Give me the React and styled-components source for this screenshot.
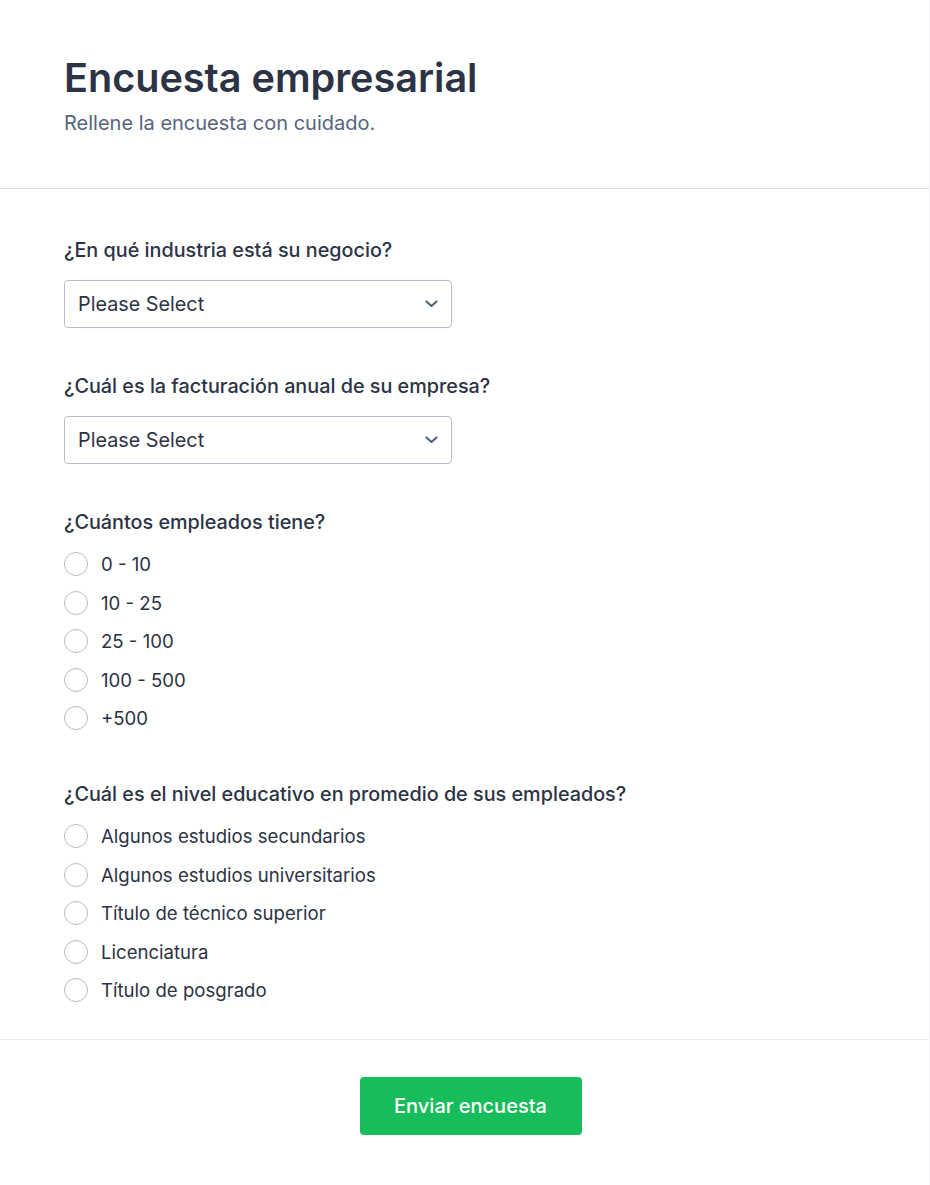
import React from "react";
import styled, { createGlobalStyle } from "styled-components";

const GlobalStyle = createGlobalStyle`
  html, body {
    margin: 0;
    padding: 0;
    background: #ffffff;
  }
  body {
    font-family: Inter, "Noto Sans", sans-serif;
    color: #2c3345;
  }
  * {
    box-sizing: border-box;
  }
`;

const questions = [
  {
    label: "¿En qué industria está su negocio?",
    type: "select",
  },
  {
    label: "¿Cuál es la facturación anual de su empresa?",
    type: "select",
  },
  {
    label: "¿Cuántos empleados tiene?",
    type: "radio",
    options: ["0 - 10", "10 - 25", "25 - 100", "100 - 500", "+500"],
  },
  {
    label: "¿Cuál es el nivel educativo en promedio de sus empleados?",
    type: "radio",
    options: [
      "Algunos estudios secundarios",
      "Algunos estudios universitarios",
      "Título de técnico superior",
      "Licenciatura",
      "Título de posgrado",
    ],
  },
];

const App = () => {
  return (
    <>
      <GlobalStyle />
      <Card>
        <Header>
          <Title>Encuesta empresarial</Title>
          <Subtitle>Rellene la encuesta con cuidado.</Subtitle>
        </Header>
        <Body>
          {questions.map((q, idx) => (
            <Question key={idx} $radio={q.type === "radio"}>
              <Label>{q.label}</Label>
              {q.type === "select" ? (
                <Select>
                  <span>Please Select</span>
                  <svg width="13" height="8" viewBox="0 0 13 8" fill="none">
                    <path
                      d="M1.5 1.5l5 4.5 5-4.5"
                      stroke="#57647e"
                      strokeWidth="2.2"
                      strokeLinecap="round"
                      strokeLinejoin="round"
                    />
                  </svg>
                </Select>
              ) : (
                <Options>
                  {q.options.map(opt => (
                    <Option key={opt}>
                      <Radio />
                      <span>{opt}</span>
                    </Option>
                  ))}
                </Options>
              )}
            </Question>
          ))}
        </Body>
        <Footer>
          <Submit>Enviar encuesta</Submit>
        </Footer>
      </Card>
    </>
  );
};

export default App;

const Card = styled.div`
  width: 930px;
  min-height: 1185px;
  border-right: 1px solid #eeeef4;
  background: #ffffff;
  display: flex;
  flex-direction: column;
`;

const Header = styled.header`
  padding: 54px 64px 0;
  height: 189px;
  border-bottom: 1px solid #dcdcea;
`;

const Title = styled.h1`
  margin: 0;
  font-size: 39.6px;
  line-height: 48px;
  font-weight: 600;
  color: #2c3345;
`;

const Subtitle = styled.p`
  margin: 9px 0 0;
  font-size: 20px;
  line-height: 24px;
  color: #57647e;
`;

const Body = styled.main`
  padding: 49px 64px 37px;
  display: flex;
  flex-direction: column;
  border-bottom: 1px solid #eaebf2;
`;

const Question = styled.section`
  display: flex;
  flex-direction: column;
  gap: 18px;
  margin-bottom: ${({ $radio }) => ($radio ? "52px" : "46px")};

  &:last-child {
    margin-bottom: 0;
  }
`;

const Label = styled.label`
  font-size: 19.8px;
  line-height: 24px;
  font-weight: 500;
  color: #2c3345;
`;

const Select = styled.div`
  width: 388px;
  height: 48px;
  padding: 0 13px;
  border: 1px solid #b8bdc9;
  border-radius: 4px;
  background: #ffffff;
  display: flex;
  align-items: center;
  justify-content: space-between;
  font-size: 19.8px;
  color: #2c3345;
`;

const Options = styled.div`
  display: flex;
  flex-direction: column;
  gap: 14.5px;
`;

const Option = styled.div`
  height: 24px;
  display: flex;
  align-items: center;
  gap: 13px;
  font-size: 18.6px;
  color: #2c3345;
`;

const Radio = styled.span`
  width: 24px;
  height: 24px;
  border-radius: 50%;
  border: 1px solid #b8bdc9;
  background: #ffffff;
  flex-shrink: 0;
`;

const Footer = styled.footer`
  padding: 37px 0 51px 12px;
  display: flex;
  justify-content: center;
`;

const Submit = styled.button`
  width: 222px;
  height: 58px;
  border: none;
  border-radius: 4px;
  background: #18bd5b;
  color: #ffffff;
  font-family: Inter, "Noto Sans", sans-serif;
  font-size: 20px;
  font-weight: 500;
  cursor: pointer;
`;
